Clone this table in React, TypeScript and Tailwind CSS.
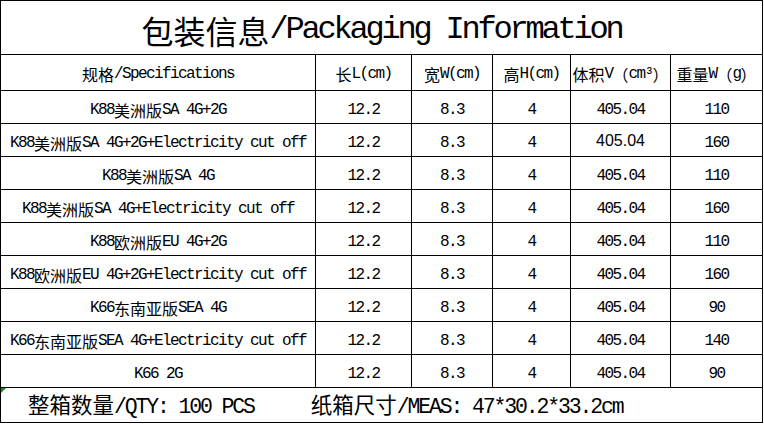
const CJK = /([\u3000-\u303f\u4e00-\u9fff\uff00-\uffef]+)/;

// SimSun-style text: CJK full width, Latin half width
const Mixed = ({ text }: { text: string }) => (
  <>
    {text.split(CJK).map((part, i) =>
      part === "" ? null : CJK.test(part) ? (
        <span key={i} className="font-['Noto_Sans_CJK_SC',sans-serif] tracking-normal">
          {part}
        </span>
      ) : (
        <span key={i} className="font-['Liberation_Mono',monospace] tracking-[-0.1em] whitespace-pre">
          {part}
        </span>
      )
    )}
  </>
);

const rows = [
  { spec: "K88美洲版SA 4G+2G", weight: "110" },
  { spec: "K88美洲版SA 4G+2G+Electricity cut off", weight: "160", arial: true },
  { spec: "K88美洲版SA 4G", weight: "110" },
  { spec: "K88美洲版SA 4G+Electricity cut off", weight: "160" },
  { spec: "K88欧洲版EU 4G+2G", weight: "110" },
  { spec: "K88欧洲版EU 4G+2G+Electricity cut off", weight: "160" },
  { spec: "K66东南亚版SEA 4G", weight: "90" },
  { spec: "K66东南亚版SEA 4G+Electricity cut off", weight: "140" },
  { spec: "K66 2G", weight: "90" },
];

const headers = ["规格/Specifications", "长L(cm)", "宽W(cm)", "高H(cm)", "体积V（cm³）", "重量W（g）"];

const Cell = ({ children }: { children: React.ReactNode }) => (
  <div className="bg-white flex items-center justify-center pt-[5px] text-[16px] leading-none text-black">
    {children}
  </div>
);

export default function App() {
  return (
    <div className="w-[764px] h-[424px] bg-white">
      <div className="w-[763px] bg-black p-px grid gap-px grid-cols-[314px_95px_80px_77px_99px_91px]">
        {/* Title */}
        <div className="col-span-6 h-[53px] bg-white flex items-center justify-center pt-[4px] text-[32px] leading-none text-black">
          <Mixed text="包装信息/Packaging Information" />
        </div>

        {/* Header */}
        {headers.map((h) => (
          <div key={h} className="h-[35px] bg-white flex items-center justify-center pt-[2px] text-[16px] leading-none text-black">
            <Mixed text={h} />
          </div>
        ))}

        {/* Rows */}
        {rows.map((r) => (
          <div key={r.spec} className="contents">
            <div className="h-[32px] bg-white flex items-center justify-center pt-[5px] text-[16px] leading-none text-black">
              <Mixed text={r.spec} />
            </div>
            <Cell>
              <Mixed text="12.2" />
            </Cell>
            <Cell>
              <Mixed text="8.3" />
            </Cell>
            <Cell>
              <Mixed text="4" />
            </Cell>
            <Cell>
              {r.arial ? (
                <span className="font-['Liberation_Sans',sans-serif] -mt-[3px]">405.04</span>
              ) : (
                <Mixed text="405.04" />
              )}
            </Cell>
            <Cell>
              <Mixed text={r.weight} />
            </Cell>
          </div>
        ))}

        {/* Footer */}
        <div className="col-span-6 h-[34px] bg-white relative flex items-center pl-[27px] pt-[2px] gap-[57px] text-[21.5px] leading-none text-black">
          <svg className="absolute left-0 top-0" width="5" height="5" viewBox="0 0 5 5">
            <polygon points="0,0 5,0 0,5" fill="#1e8a2c" />
          </svg>
          <span>
            <Mixed text="整箱数量/QTY: 100 PCS" />
          </span>
          <span>
            <Mixed text="纸箱尺寸/MEAS: 47*30.2*33.2cm" />
          </span>
        </div>
      </div>
    </div>
  );
}
